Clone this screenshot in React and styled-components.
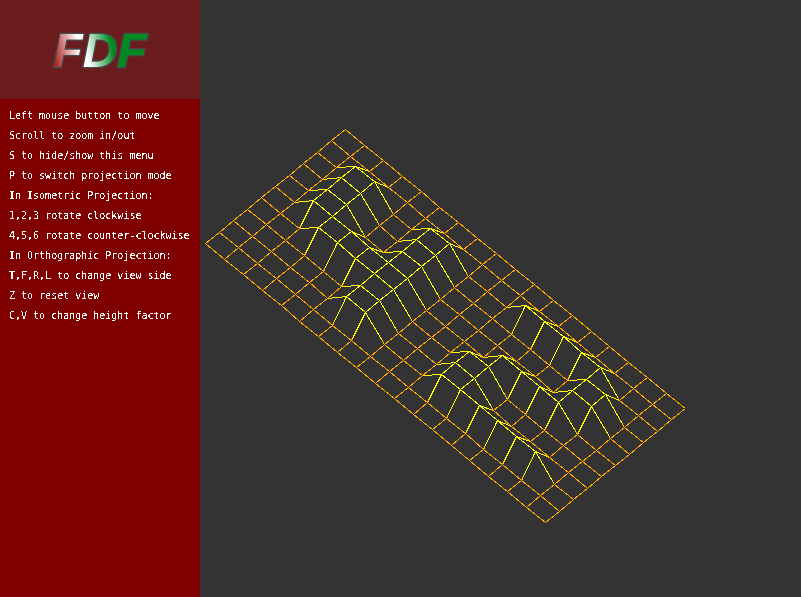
import React from "react";
import styled, { createGlobalStyle } from "styled-components";

const GlobalStyle = createGlobalStyle`
  html, body { margin: 0; padding: 0; background: #333333; }
`;

const Window = styled.div`
  display: flex;
  width: 801px;
  height: 597px;
  overflow: hidden;
  background: #333333;
`;

const Sidebar = styled.aside`
  display: flex;
  flex-direction: column;
  flex: 0 0 200px;
  height: 597px;
  background: #800000;
`;

const Header = styled.header`
  flex: 0 0 99px;
  background: #6b1c1c;
`;

const LogoSvg = styled.svg`
  display: block;
  width: 200px;
  height: 99px;
`;

const Menu = styled.ul`
  list-style: none;
  margin: 0;
  padding: 7px 0 0 9px;
  filter: url(#crisp);
`;

const MenuItem = styled.li`
  height: 20px;
  line-height: 20px;
  font-family: "DejaVu Sans Mono", "Liberation Mono", monospace;
  font-size: 10px;
  color: #ffffff;
  white-space: pre;
`;

const Viewport = styled.main`
  flex: 1;
  height: 597px;
`;

const WireSvg = styled.svg`
  display: block;
  width: 601px;
  height: 597px;
`;

const MAP = [
  "0000000000000000000",
  "0000000000000000000",
  "0011001100011111000",
  "0011001100000001100",
  "0011001100000001100",
  "0011111100001111000",
  "0001111100011000000",
  "0000001100011000000",
  "0000001100011111100",
  "0000000000000000000",
  "0000000000000000000",
];

const ORANGE = "#ffa500";
const YELLOW = "#ffff00";
const TOP = [345, 129];
const UX = [340 / 18, 279 / 18];
const UY = [-140 / 10, 114 / 10];
const LIFT = 17;

const point = (x, y) => {
  const raised = MAP[y][x] === "1";
  return {
    x: Math.round(TOP[0] + x * UX[0] + y * UY[0]) + 0.5,
    y: Math.round(TOP[1] + x * UX[1] + y * UY[1] - (raised ? LIFT : 0)) + 0.5,
    raised,
  };
};

const buildEdges = () => {
  const edges = [];
  for (let y = 0; y < MAP.length; y++) {
    for (let x = 0; x < MAP[0].length; x++) {
      const a = point(x, y);
      if (x < MAP[0].length - 1) edges.push({ id: `h${x}-${y}`, a, b: point(x + 1, y) });
      if (y < MAP.length - 1) edges.push({ id: `v${x}-${y}`, a, b: point(x, y + 1) });
    }
  }
  const rank = (e) => (e.a.raised ? 1 : 0) + (e.b.raised ? 1 : 0);
  return edges.sort((p, q) => rank(p) - rank(q));
};

const EDGES = buildEdges();

const strokeOf = (e) => {
  if (e.a.raised && e.b.raised) return YELLOW;
  if (!e.a.raised && !e.b.raised) return ORANGE;
  return `url(#g-${e.id})`;
};

const Wireframe = () => (
  <WireSvg viewBox="200 0 601 597">
    <defs>
      {EDGES.filter((e) => e.a.raised !== e.b.raised).map((e) => {
        const low = e.a.raised ? e.b : e.a;
        const high = e.a.raised ? e.a : e.b;
        return (
          <linearGradient
            key={e.id}
            id={`g-${e.id}`}
            gradientUnits="userSpaceOnUse"
            x1={low.x}
            y1={low.y}
            x2={high.x}
            y2={high.y}
          >
            <stop offset="0" stopColor={ORANGE} />
            <stop offset="0.2" stopColor={YELLOW} />
            <stop offset="1" stopColor={YELLOW} />
          </linearGradient>
        );
      })}
    </defs>
    {EDGES.map((e) => (
      <line
        key={e.id}
        x1={e.a.x}
        y1={e.a.y}
        x2={e.b.x}
        y2={e.b.y}
        stroke={strokeOf(e)}
        strokeWidth="1"
        shapeRendering="crispEdges"
      />
    ))}
  </WireSvg>
);

const Logo = () => (
  <LogoSvg viewBox="0 0 200 99">
    <defs>
      <linearGradient id="fdf" gradientUnits="userSpaceOnUse" x1="55" y1="62" x2="148" y2="42">
        <stop offset="0" stopColor="#b02222" />
        <stop offset="0.28" stopColor="#ffffff" />
        <stop offset="0.36" stopColor="#f4fbf5" />
        <stop offset="0.62" stopColor="#008a22" />
        <stop offset="1" stopColor="#008a22" />
      </linearGradient>
      <filter id="soft" x="-10%" y="-10%" width="120%" height="120%">
        <feGaussianBlur stdDeviation="0.4" />
      </filter>
      <filter id="crisp" colorInterpolationFilters="sRGB">
        <feComponentTransfer>
          <feFuncA type="discrete" tableValues="0 1" />
        </feComponentTransfer>
      </filter>
    </defs>
    <text
      x="100"
      y="66.5"
      textAnchor="middle"
      fontFamily="'Liberation Sans', Arial, sans-serif"
      fontWeight="700"
      fontStyle="italic"
      fontSize="48"
      fill="url(#fdf)"
      stroke="#454c4c"
      strokeWidth="2.6"
      paintOrder="stroke"
      filter="url(#soft)"
    >
      FDF
    </text>
  </LogoSvg>
);

const HELP = [
  "Left mouse button to move",
  "Scroll to zoom in/out",
  "S to hide/show this menu",
  "P to switch projection mode",
  "In Isometric Projection:",
  "1,2,3 rotate clockwise",
  "4,5,6 rotate counter-clockwise",
  "In Orthographic Projection:",
  "T,F,R,L to change view side",
  "Z to reset view",
  "C,V to change height factor",
];

export default function App() {
  return (
    <Window>
      <GlobalStyle />
      <Sidebar>
        <Header>
          <Logo />
        </Header>
        <Menu>
          {HELP.map((line) => (
            <MenuItem key={line}>{line}</MenuItem>
          ))}
        </Menu>
      </Sidebar>
      <Viewport>
        <Wireframe />
      </Viewport>
    </Window>
  );
}
